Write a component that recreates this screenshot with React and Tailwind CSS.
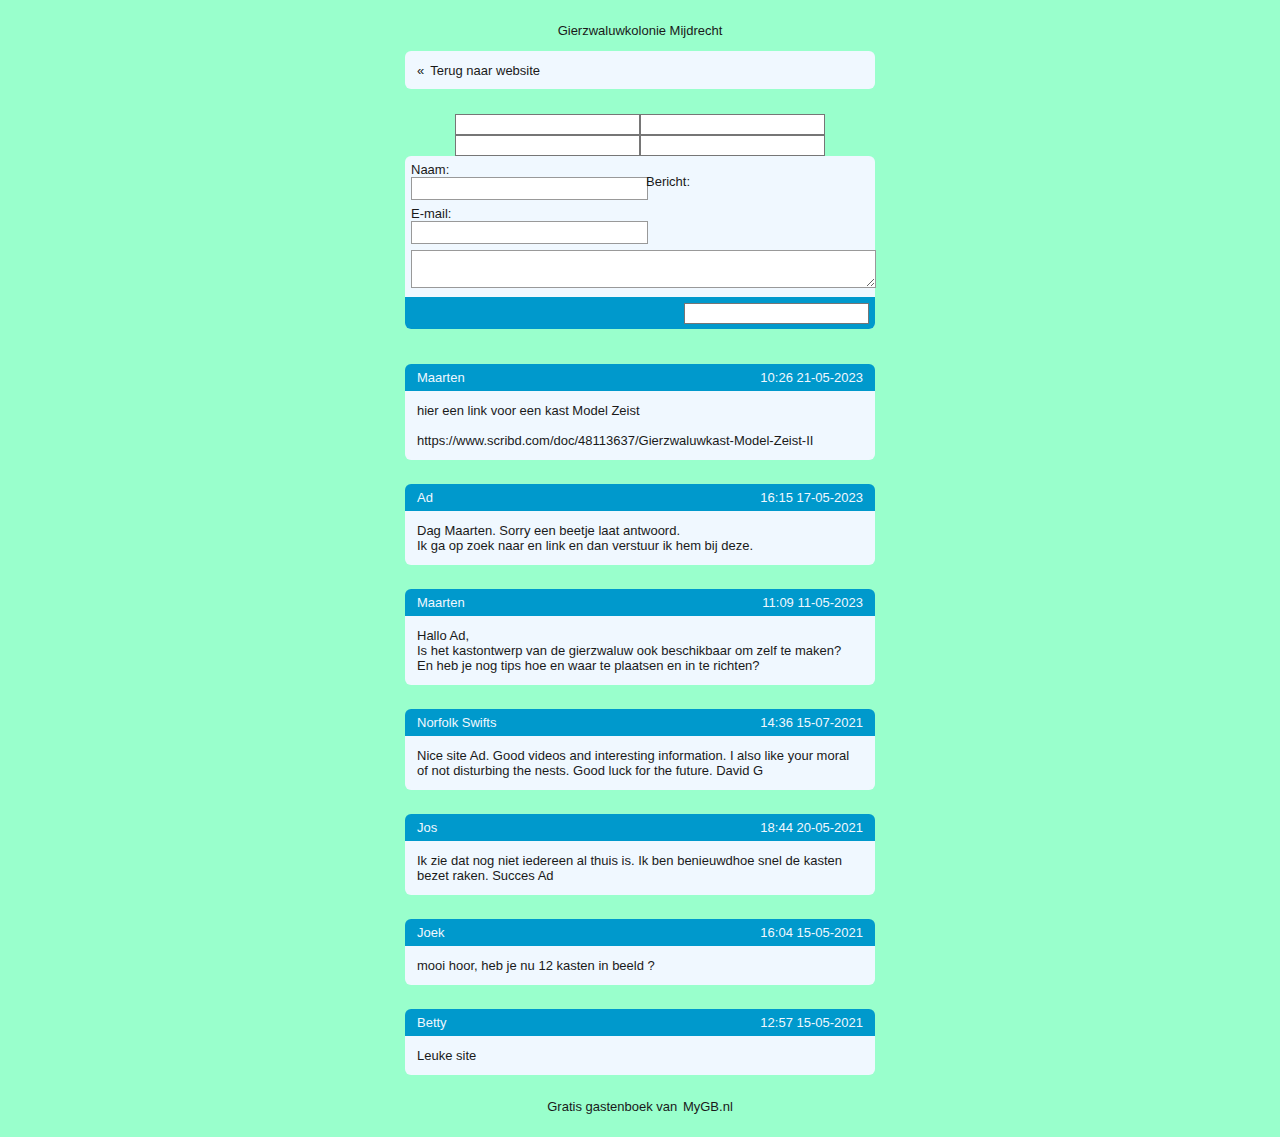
import React from 'react'

const entries = [
  {
    name: 'Maarten',
    date: '10:26 21-05-2023',
    lines: ['hier een link voor een kast Model Zeist', '', 'https://www.scribd.com/doc/48113637/Gierzwaluwkast-Model-Zeist-II'],
  },
  {
    name: 'Ad',
    date: '16:15 17-05-2023',
    lines: ['Dag Maarten. Sorry een beetje laat antwoord.', 'Ik ga op zoek naar en link en dan verstuur ik hem bij deze.'],
  },
  {
    name: 'Maarten',
    date: '11:09 11-05-2023',
    lines: [
      'Hallo Ad,',
      'Is het kastontwerp van de gierzwaluw ook beschikbaar om zelf te maken?',
      'En heb je nog tips hoe en waar te plaatsen en in te richten?',
    ],
  },
  {
    name: 'Norfolk Swifts',
    date: '14:36 15-07-2021',
    lines: [
      'Nice site Ad. Good videos and interesting information. I also like your moral of not disturbing the nests. Good luck for the future. David G',
    ],
  },
  {
    name: 'Jos',
    date: '18:44 20-05-2021',
    lines: ['Ik zie dat nog niet iedereen al thuis is. Ik ben benieuwdhoe snel de kasten bezet raken. Succes Ad'],
  },
  {
    name: 'Joek',
    date: '16:04 15-05-2021',
    lines: ['mooi hoor, heb je nu 12 kasten in beeld ?'],
  },
  {
    name: 'Betty',
    date: '12:57 15-05-2021',
    lines: ['Leuke site'],
  },
]

function Entry({ name, date, lines }) {
  return (
    <div className="mb-[24px] overflow-hidden rounded-[6px]">
      <div className="flex h-[27px] items-center justify-between bg-[#0099cc] px-3 text-[#f0f8ff]">
        <span>{name}</span>
        <span>{date}</span>
      </div>
      <div className="bg-[#f0f8ff] px-3 py-3">
        {lines.map((l, i) => (
          <div key={i} className="min-h-[15px]">
            {l}
          </div>
        ))}
      </div>
    </div>
  )
}

export default function App() {
  return (
    <div className="min-h-[1137px] bg-[#99ffcc] pb-[24px] pt-[23px] font-['Liberation_Sans',Arial,sans-serif] text-[13px] leading-[15px] text-[#1a1a1a]">
      <div className="mx-auto w-[470px]">
        <div className="text-center">Gierzwaluwkolonie Mijdrecht</div>

        <div className="mt-[13px] flex h-[38px] items-center rounded-[6px] bg-[#f0f8ff] px-3">
          <span className="mr-[6px]">«</span>
          <span>Terug naar website</span>
        </div>

        <div className="mt-[25px] flex justify-center">
          <div className="grid grid-cols-[185px_185px]">
            <input className="h-[21px] border border-[#767676] bg-white" />
            <input className="h-[21px] border border-[#767676] bg-white" />
            <input className="h-[21px] border border-[#767676] bg-white" />
            <input className="h-[21px] border border-[#767676] bg-white" />
          </div>
        </div>

        <div className="rounded-[6px] bg-[#f0f8ff]">
          <div className="flex pl-[6px] pt-[6px]">
            <div className="w-[235px] shrink-0">
              <div>Naam:</div>
              <input className="block h-[23px] w-[237px] border border-[#999] bg-white" />
              <div className="mt-[6px]">E-mail:</div>
              <input className="block h-[23px] w-[237px] border border-[#999] bg-white" />
            </div>
            <div className="pt-[12px]">Bericht:</div>
          </div>
          <textarea className="ml-[6px] mt-[6px] block h-[38px] w-[465px] border border-[#999] bg-white" />
          <div className="mt-[9px] flex h-[32px] items-center justify-end rounded-b-[6px] bg-[#0099cc] pr-[6px]">
            <input className="h-[21px] w-[185px] border border-[#767676] bg-white" />
          </div>
        </div>

        <div className="mt-[35px]">
          {entries.map((e, i) => (
            <Entry key={i} {...e} />
          ))}
        </div>

        <div className="text-center">
          Gratis gastenboek van <span className="ml-[2px]">MyGB.nl</span>
        </div>
      </div>
    </div>
  )
}
